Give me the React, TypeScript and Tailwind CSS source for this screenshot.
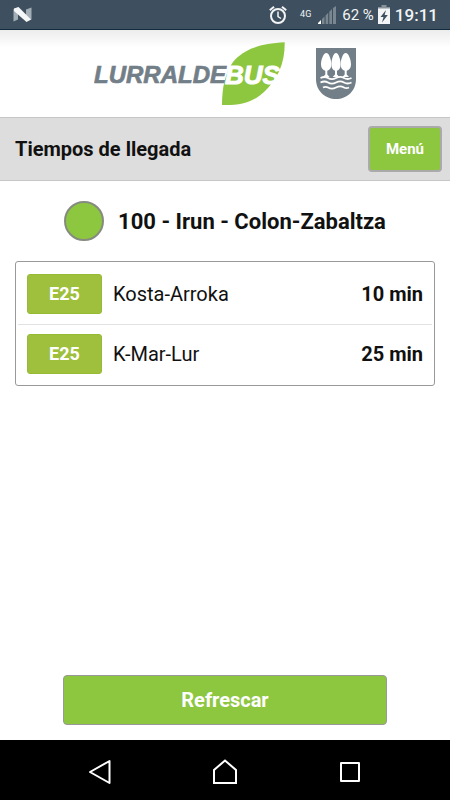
import React from 'react';

const arrivals = [
  { id: 1, line: 'E25', destination: 'Kosta-Arroka', wait: '10 min' },
  { id: 2, line: 'E25', destination: 'K-Mar-Lur', wait: '25 min' },
];

const StatusBar = () => (
  <div className="flex h-[30px] items-center border-b border-[#132a3d] bg-[#3e505f] pr-3 pl-[13px] text-[#f2f4f5]">
    <svg width="19" height="15" viewBox="0 0 19 15" aria-hidden="true">
      <path d="M.5 2 5 .5V12.500L.5 14.500zM13 2.500 18.500 .5V12.500L13 14.500z" fill="#a3adb5" />
      <path d="M1 1.500 5.500 0 18 12.500 13.500 15 1 4z" fill="#f4f6f8" />
    </svg>
    <div className="ml-auto flex items-center">
      <svg width="18" height="20" viewBox="0 0 18 20" fill="none" stroke="currentColor" aria-hidden="true">
        <circle cx="9" cy="11" r="7" strokeWidth="2" />
        <path d="M9 6.500V11.500l3 2" strokeWidth="1.500" />
        <path d="M.8 5.200 5 1.700M17.200 5.200 13 1.700" strokeWidth="2" />
      </svg>
      <span className="ml-[13px] self-start text-[9px] leading-[18px]">4G</span>
      <svg className="ml-[7px]" width="18" height="18" viewBox="0 0 18 18" aria-hidden="true">
        <path d="M0 18v-1l3-3v4z" fill="#fff" />
        <path d="M4 18v-5l2.500-2.500V18zM7.600 18V9.400L10.200 6.800V18zM11.300 18V5.700L14 3v15zM15 18V2L18 0v18z" fill="#7b8790" />
      </svg>
      <span className="ml-[6px] text-[15px] leading-5">62 %</span>
      <svg className="ml-1" width="12" height="19" viewBox="0 0 12 19" aria-hidden="true">
        <path d="M3.500 0h5v2H12v2H0V2h3.500z" fill="#87929b" />
        <path d="M0 3.500h12V19H0z" fill="#f2f4f5" />
        <path d="M8 5 2.500 12H5.500L4 17.500 9.800 10H6.600z" fill="#3e505f" />
      </svg>
      <span className="ml-[5px] text-[17px] leading-5 font-medium">19:11</span>
    </div>
  </div>
);

const Logo = () => (
  <svg width="192" height="64" viewBox="94 42 192 64" role="img" aria-label="Lurraldebus">
    <path
      d="M284.700 42.300C259 43.500 243 50 233 62C225 73 222 88 222 105C241 105.500 253 102 264 92C278 79 285 63 284.700 42.300Z"
      fill="#8dc63f"
    />
    <text
      x="94"
      y="83"
      fontSize="24"
      fill="#737f88"
      stroke="#737f88"
      strokeWidth="0.700"
      className="font-['Liberation_Sans',Arial,sans-serif] font-bold italic"
    >
      LURRALDE
    </text>
    <text
      x="225"
      y="84"
      fontSize="26"
      fill="#fff"
      stroke="#fff"
      strokeWidth="1"
      className="font-['Liberation_Sans',Arial,sans-serif] font-bold italic"
    >
      BUS
    </text>
  </svg>
);

const Shield = () => (
  <svg width="40" height="51" viewBox="0 0 40 51" aria-hidden="true">
    <path d="M0 0h40v31c0 12-9 20-20 20S0 43 0 31z" fill="#737f88" />
    <g fill="#fff">
      <path d="M10.300 5C7.500 5 5 11.500 5 16.500c0 3.500 2 5.700 4.300 6.300v3.700L7 29h6.600l-2.300-2.500v-3.700c2.300-.6 4-2.800 4-6.300 0-5-2.200-11.500-5-11.500z" />
      <path d="M20 5c-2.600 0-4.600 6.500-4.600 11.500 0 3.500 1.500 5.700 3.600 6.300v3.700L16.700 29h6.600L21 26.500v-3.700c2.100-.6 3.600-2.800 3.600-6.300C24.600 11.500 22.600 5 20 5z" />
      <path d="M29.700 5c2.800 0 5.300 6.500 5.300 11.500 0 3.500-2 5.700-4.300 6.300v3.700L33 29h-6.600l2.300-2.500v-3.700c-2.300-.6-4-2.800-4-6.300 0-5 2.200-11.500 5-11.500z" />
    </g>
    <g fill="none" stroke="#fff" strokeWidth="1.800">
      <path d="M4.500 30c3-1.500 5-1.500 7.500 0s5 1.500 8 0 5.500-1.500 8 0 4.500 1.500 7.500 0" />
      <path d="M4.500 34.500c3-1.500 5-1.500 7.500 0s5 1.500 8 0 5.500-1.500 8 0 4.500 1.500 7.500 0" />
      <path d="M7 39.500c2-1 3.500-.9 5 0 2.500 1.500 5 1.500 8 0s5.500-1.500 8 0c1.500.9 3 1 5 0" />
    </g>
  </svg>
);

const NavBar = () => (
  <nav className="grid h-[60px] grid-cols-3 place-items-center bg-black px-[37px] pt-1 text-white">
    <button type="button" aria-label="Atrás">
      <svg width="24" height="26" viewBox="0 0 24 26" fill="none" stroke="currentColor" strokeWidth="2" strokeLinejoin="round">
        <path d="M21.500 2v22L2 13z" />
      </svg>
    </button>
    <button type="button" aria-label="Inicio">
      <svg width="26" height="26" viewBox="0 0 26 26" fill="none" stroke="currentColor" strokeWidth="2">
        <path d="M2 24V11L13 1.500 24 11v13z" />
      </svg>
    </button>
    <button type="button" aria-label="Recientes">
      <svg width="22" height="22" viewBox="0 0 22 22" fill="none" stroke="currentColor" strokeWidth="2" strokeLinejoin="round">
        <path d="M2 2h18v18H2z" />
      </svg>
    </button>
  </nav>
);

const App = () => {
  return (
    <div className="flex min-h-screen flex-col bg-white font-['Roboto',sans-serif] text-[#111]">
      <StatusBar />

      <header className="flex h-[87px] items-center justify-center gap-[30px] bg-linear-to-b from-[#ececec] to-white to-20%">
        <Logo />
        <Shield />
      </header>

      <div className="flex h-16 items-center justify-between border-y border-[#c6c6c6] bg-[#ddd] pr-2 pl-[15px]">
        <h1 className="text-xl font-bold">Tiempos de llegada</h1>
        <button type="button" className="h-[46px] rounded-[4px] border-2 border-[#aaa] bg-[#8dc63f] px-4 text-[15px] font-bold text-white">
          Menú
        </button>
      </div>

      <main className="flex flex-1 flex-col px-[15px] pt-5 pb-[15px]">
        <div className="flex items-center justify-center gap-[14px]">
          <span className="size-10 rounded-full border-2 border-[#868b80] bg-[#8dc63f]"></span>
          <h2 className="text-[22px] font-bold">100 - Irun - Colon-Zabaltza</h2>
        </div>

        <div className="mt-5 rounded-[3px] border border-[#999] px-[2px] pt-[2px] pb-px">
          <table className="w-full text-xl">
            <tbody>
              {arrivals.map((arrival) => (
                <tr key={arrival.id} className="h-[60px] border-b border-[#e2e2e2] last:border-b-0">
                  <td className="w-[95px] pl-[9px]">
                    <span className="flex h-10 w-[75px] items-center justify-center rounded-[3px] border border-[#95bb35] bg-[#9fc03c] text-lg font-bold text-white">
                      {arrival.line}
                    </span>
                  </td>
                  <td>{arrival.destination}</td>
                  <td className="pr-[9px] text-right font-bold">{arrival.wait}</td>
                </tr>
              ))}
            </tbody>
          </table>
        </div>

        <button type="button" className="mx-auto mt-auto h-[50px] w-[77%] rounded-[4px] border border-[#999] bg-[#8dc63f] text-xl font-bold text-white">
          Refrescar
        </button>
      </main>

      <NavBar />
    </div>
  );
};

export default App;
